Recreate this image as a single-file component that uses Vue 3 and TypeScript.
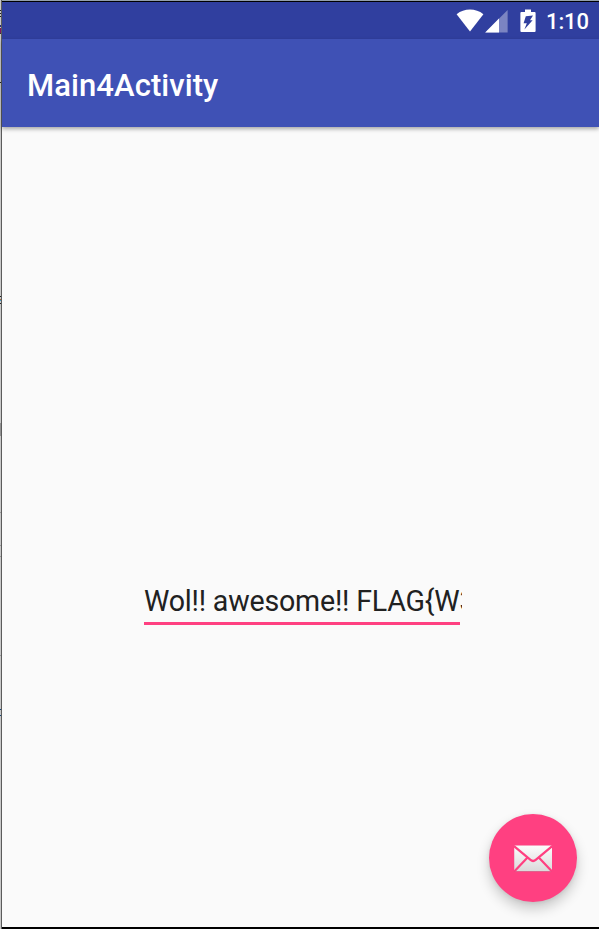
<script setup lang="ts">
import { ref } from 'vue'

const title = ref<string>('Main4Activity')
const time = ref<string>('1:10')
const message = ref<string>('Wol!! awesome!! FLAG{W3')
</script>

<template>
  <div class="window">
    <div class="edge"></div>
    <main class="screen">
      <header class="status">
        <svg class="wifi" viewBox="0 0 28 24" width="28" height="24">
          <path d="M0.6 5.2Q6.6 0.6 14 0.6T27.4 5.2L14 22.4Z" />
        </svg>
        <svg class="signal" viewBox="0 0 23 23" width="23" height="23">
          <path class="weak" d="M22.6 0V22.4H0.2Z" />
          <path d="M14 8.6V22.4H0.2Z" />
        </svg>
        <svg class="battery" viewBox="0 0 16 24" width="16" height="24">
          <path class="shell" d="M5 .5H11V3H14.6Q15.6 3 15.6 4V22Q15.6 23 14.6 23H1.4Q.4 23 .4 22V4Q.4 3 1.4 3H5Z" />
          <path class="bolt" d="M5.8 7.2L13 6.4L10 11.2H12.6L4.4 20.4L6.8 14.2H3.6Z" />
        </svg>
        <span class="time">{{ time }}</span>
      </header>
      <div class="toolbar"><h1>{{ title }}</h1></div>
      <section class="content">
        <div class="field"><span class="value">{{ message }}</span></div>
        <button class="fab" type="button" aria-label="Email">
          <svg viewBox="0 0 40 28" width="40" height="28">
            <defs>
              <linearGradient id="paper" x1="0" y1="0" x2="0" y2="28" gradientUnits="userSpaceOnUse">
                <stop offset="0" stop-color="#ffffff" />
                <stop offset="1" stop-color="#d9d9d9" />
              </linearGradient>
            </defs>
            <rect x="1.2" y="1.8" width="37.8" height="26" rx="1" fill="#b43862" opacity=".6" />
            <rect x="1.2" y="1.4" width="37.8" height="25.8" rx="1" fill="url(#paper)" />
            <path class="fold" d="M1 2.1L17.5 15.9Q20.1 18.1 22.7 15.9L39.2 2.1M1.5 27.2L14.3 13.7M38.8 27.2L26 13.7" />
          </svg>
        </button>
      </section>
    </main>
  </div>
</template>

<style>
html, body { margin: 0; overflow: hidden; }
</style>

<style scoped>
.window {
  box-sizing: border-box;
  display: flex;
  width: 599px;
  height: 929px;
  font-family: Roboto, sans-serif;
}
.edge {
  box-sizing: border-box;
  flex: none;
  width: 2px;
  border-right: 1px solid #5b5b5b;
  background: linear-gradient(
    #c8c8c8 10px, #222 10px 11px, #c8c8c8 11px 13px, #222 13px 14px,
    #c8c8c8 14px 16px, #222 16px 17px, #c8c8c8 17px 25px, #27307d 25px 27px,
    #c8c8c8 27px 28px, #7d1760 28px 33px, #333 33px 34px, #c8c8c8 34px 82px,
    #222 82px 83px, #c8c8c8 83px 296px, #222 296px 297px, #c8c8c8 297px 299px,
    #9a6840 299px 300px, #4898c0 300px 301px, #c8c8c8 301px 303px,
    #222 303px 304px, #c8c8c8 304px 423px, #929292 423px 436px,
    #c8c8c8 436px 512px, #999 512px 513px, #c8c8c8 513px 545px,
    #999 545px 546px, #c8c8c8 546px 556px, #999 556px 557px,
    #c8c8c8 557px 655px, #999 655px 656px, #c8c8c8 656px 709px,
    #174778 709px 710px, #c8c8c8 710px 715px, #174778 715px 716px, #c8c8c8 716px
  );
}
.screen {
  box-sizing: border-box;
  flex: 1;
  min-width: 0;
  display: flex;
  flex-direction: column;
  padding-top: 1px;
  border-bottom: 2px solid #000;
  background: #929fac;
}
.status {
  box-sizing: border-box;
  flex: none;
  display: flex;
  height: 38px;
  padding: 7px 9px 0 0;
  justify-content: flex-end;
  align-items: flex-start;
  background: #303f9f;
  border-top: 1px solid #000;
  color: #fff;
}
svg { display: block; fill: #fff; }
.wifi { margin-right: 1px; }
.signal { margin-right: 12px; margin-top: 1px; }
.weak { fill: #7b84c2; }
.bolt { fill: #303f9f; }
.time {
  margin-left: 10px;
  width: 44px;
  font-size: 22px;
  line-height: 26px;
  font-weight: 500;
  letter-spacing: -.1px;
  white-space: nowrap;
}
.toolbar {
  position: relative;
  flex: none;
  display: flex;
  align-items: center;
  height: 88px;
  padding-left: 25px;
  background: #3f51b5;
  box-shadow: 0 2px 4px rgba(0, 0, 0, .34);
  color: #fff;
}
h1 {
  margin: 6px 0 0;
  font-size: 31px;
  line-height: 38px;
  font-weight: 500;
  letter-spacing: .08px;
}
.content {
  box-sizing: border-box;
  flex: 1;
  display: flex;
  flex-direction: column;
  justify-content: space-between;
  padding: 454px 22px 25px 142px;
  background: #fafafa;
}
.field {
  width: 316px;
  height: 41px;
  border-bottom: 3px solid #ff4081;
  color: #212121;
  font-size: 28.6px;
  line-height: 40px;
  letter-spacing: -.2px;
  white-space: nowrap;
}
.value { display: block; width: 318px; height: 41px; overflow: hidden; }
.fab {
  align-self: flex-end;
  display: grid;
  place-items: center;
  width: 88px;
  height: 88px;
  padding: 0;
  border: 0;
  border-radius: 50%;
  background: #ff4081;
  box-shadow: 0 7px 13px rgba(0, 0, 0, .2), 0 1px 4px rgba(0, 0, 0, .08);
}
.fold { fill: none; stroke: #ff4081; stroke-width: 2.2; }
</style>
